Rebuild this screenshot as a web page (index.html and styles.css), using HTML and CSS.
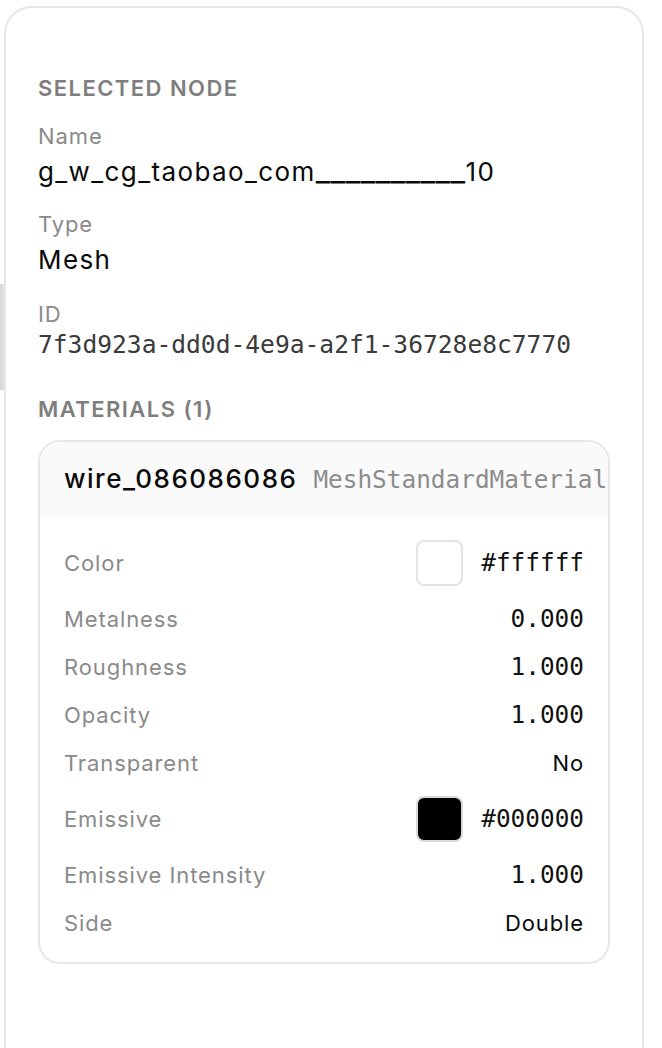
FILE: index.html
```html
<!DOCTYPE html>
<html lang="en">
<head>
<meta charset="utf-8">
<title>Selected Node</title>
<link rel="stylesheet" href="styles.css">
</head>
<body>
<div class="edge-shadow"></div>
<aside class="panel">
  <section class="section">
    <h2 class="heading">Selected Node</h2>
    <div class="field field-gap-a">
      <div class="label">Name</div>
      <div class="value">g_w_cg_taobao_com<span class="underscores">__________</span>10</div>
    </div>
    <div class="field field-gap-b">
      <div class="label">Type</div>
      <div class="value">Mesh</div>
    </div>
    <div class="field">
      <div class="label">ID</div>
      <div class="value-mono">7f3d923a-dd0d-4e9a-a2f1-36728e8c7770</div>
    </div>
  </section>

  <section class="section materials">
    <h2 class="heading heading-mat">Materials (1)</h2>
    <div class="card">
      <div class="card-head">
        <span class="mat-name">wire_086086086</span>
        <span class="mat-type">MeshStandardMaterial</span>
      </div>
      <div class="card-body">
        <div class="row row-tall">
          <span class="row-label">Color</span>
          <span class="row-value"><span class="swatch swatch-white"></span><span class="mono">#ffffff</span></span>
        </div>
        <div class="row">
          <span class="row-label">Metalness</span>
          <span class="mono">0.000</span>
        </div>
        <div class="row">
          <span class="row-label">Roughness</span>
          <span class="mono">1.000</span>
        </div>
        <div class="row">
          <span class="row-label">Opacity</span>
          <span class="mono">1.000</span>
        </div>
        <div class="row">
          <span class="row-label">Transparent</span>
          <span class="text-val">No</span>
        </div>
        <div class="row row-tall">
          <span class="row-label">Emissive</span>
          <span class="row-value"><span class="swatch swatch-black"></span><span class="mono">#000000</span></span>
        </div>
        <div class="row">
          <span class="row-label">Emissive Intensity</span>
          <span class="mono">1.000</span>
        </div>
        <div class="row">
          <span class="row-label">Side</span>
          <span class="text-val">Double</span>
        </div>
      </div>
    </div>
  </section>
</aside>
</body>
</html>
```

FILE: styles.css
```css
* {
  box-sizing: border-box;
}

html, body {
  margin: 0;
  padding: 0;
  background: #ffffff;
}

body {
  font-family: Inter, "Noto Sans", "Liberation Sans", sans-serif;
  color: #0a0a0a;
  height: 1048px;
  overflow: hidden;
  position: relative;
}

.edge-shadow {
  position: absolute;
  left: 0;
  top: 284px;
  width: 6px;
  height: 106px;
  background: linear-gradient(to right, #d6d6d6, #e9e9e9);
  border-radius: 0 2px 2px 0;
}

.panel {
  position: relative;
  margin: 6px 0 0 4px;
  width: 640px;
  min-height: 1100px;
  border: 2px solid #e6e6e6;
  border-radius: 28px;
  background: #ffffff;
  padding: 66px 32px 32px;
}

.heading {
  margin: 0 0 20px;
  font-size: 22px;
  line-height: 28px;
  font-weight: 600;
  text-transform: uppercase;
  letter-spacing: 1.45px;
  color: #7e7e7e;
}

.heading-mat {
  margin-bottom: 17px;
}

.field-gap-a {
  margin-bottom: 16px;
}

.field-gap-b {
  margin-bottom: 18px;
}

.label {
  font-size: 22px;
  line-height: 28px;
  letter-spacing: 0.9px;
  color: #8a8a8a;
}

.value {
  font-size: 26px;
  line-height: 44px;
  letter-spacing: 1.4px;
  color: #0a0a0a;
  white-space: nowrap;
}

.underscores {
  font-size: 32px;
  line-height: 1;
  letter-spacing: 0.4px;
}

.value-mono {
  font-family: "DejaVu Sans Mono", "Liberation Mono", monospace;
  font-size: 24.6px;
  line-height: 34px;
  color: #3a3a3a;
  white-space: nowrap;
}

.materials {
  margin-top: 33px;
}

.card {
  border: 2px solid #e6e6e6;
  border-radius: 22px;
  overflow: hidden;
}

.card-head {
  display: flex;
  align-items: baseline;
  gap: 16px;
  padding: 24px 24px;
  background: #fafafa;
  white-space: nowrap;
}

.mat-name {
  font-size: 26px;
  line-height: 25px;
  font-weight: 500;
  letter-spacing: 1.5px;
  color: #0a0a0a;
}

.mat-type {
  font-family: "DejaVu Sans Mono", "Liberation Mono", monospace;
  font-size: 24.4px;
  line-height: 25px;
  color: #8c8c8c;
}

.card-body {
  display: flex;
  flex-direction: column;
  gap: 16px;
  padding: 23px 24px;
}

.row {
  display: flex;
  align-items: center;
  justify-content: space-between;
  min-height: 32px;
}

.row-tall {
  min-height: 48px;
}

.row-label {
  font-size: 22px;
  line-height: 32px;
  letter-spacing: 0.9px;
  color: #8a8a8a;
}

.row-value {
  display: flex;
  align-items: center;
  gap: 18px;
}

.mono {
  font-family: "DejaVu Sans Mono", "Liberation Mono", monospace;
  font-size: 24.4px;
  line-height: 32px;
  color: #111111;
}

.text-val {
  font-size: 22px;
  line-height: 32px;
  letter-spacing: 0.9px;
  color: #0a0a0a;
}

.swatch {
  display: block;
  width: 47px;
  height: 46px;
  border-radius: 8px;
  border: 2px solid #e3e3e3;
}

.swatch-white {
  background: #ffffff;
}

.swatch-black {
  background: #000000;
  border-color: #d9d9d9;
}
```
